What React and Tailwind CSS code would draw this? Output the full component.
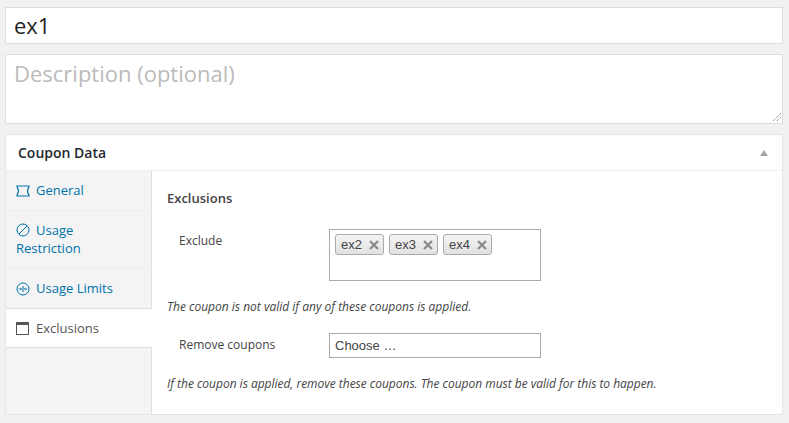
import React from 'react';

const TicketIcon = () => (
  <svg width="14" height="12" viewBox="0 0 14 12" fill="none" stroke="currentColor" strokeWidth="1.2" className="shrink-0">
    <path d="M1 1H13C13 3 11.500 4.200 11.500 6C11.500 7.800 13 9 13 11H1C1 9 2.500 7.800 2.500 6C2.500 4.200 1 3 1 1Z" />
  </svg>
);

const BanIcon = () => (
  <svg width="14" height="14" viewBox="0 0 14 14" fill="none" stroke="currentColor" strokeWidth="1" className="inline-block shrink-0">
    <circle cx="7" cy="7" r="6" />
    <path d="M3 11L11 3" />
  </svg>
);

const LimitsIcon = () => (
  <svg width="14" height="14" viewBox="0 0 14 14" fill="none" stroke="currentColor" strokeWidth="1" className="shrink-0">
    <circle cx="7" cy="7" r="6" />
    <path d="M7 4v6M3 7h2M9 7h2" />
    <path d="M4.500 5.800L5.700 7L4.500 8.200M9.500 5.800L8.300 7L9.500 8.200" strokeWidth="0.8" />
  </svg>
);

const WindowIcon = () => (
  <svg width="13" height="13" viewBox="0 0 13 13" className="shrink-0">
    <rect x="0.500" y="0.500" width="12" height="12" fill="none" stroke="#555" />
    <rect x="0" y="0" width="13" height="3" fill="#555" />
  </svg>
);

const Tag = ({ label }) => (
  <span className="flex items-center justify-between w-[49px] h-[21px] pl-[5px] pr-[4px] rounded-[3px] border border-[#aaa] bg-linear-to-b from-[#f4f4f4] to-[#e2e2e2] font-['Liberation_Sans',sans-serif] text-[13px] text-[#444]">
    {label}
    <svg width="10" height="10" viewBox="0 0 10 10" stroke="#888" strokeWidth="2.2">
      <path d="M1 1L9 9M9 1L1 9" />
    </svg>
  </span>
);

const App = () => {
  return (
    <div className="w-[789px] h-[423px] overflow-hidden bg-[#f1f1f1] pt-[7px] pl-[5px] pr-[6px] font-['Open_Sans',sans-serif] text-[#444]">
      <div className="h-[37px] flex items-center px-[8px] bg-white border border-[#ddd] text-[22px] text-[#222]">
        ex1
      </div>

      <div className="relative mt-[10px] h-[70px] px-[8px] pt-[2px] bg-white border border-[#ddd] text-[22px] text-[#bbb]">
        Description (optional)
        <svg width="10" height="10" viewBox="0 0 10 10" className="absolute right-[0px] bottom-[1px]" stroke="#666" strokeDasharray="1 1">
          <path d="M1 9L9 1M5 9L9 5" />
        </svg>
      </div>

      <div className="mt-[10px] h-[281px] flex flex-col bg-white border border-[#e5e5e5]">
        <div className="h-[36px] shrink-0 flex items-center justify-between pl-[12px] pr-[14px] border-b border-[#eee]">
          <span className="text-[14px] font-semibold text-[#23282d]">Coupon Data</span>
          <span className="mt-[1px] w-0 h-0 border-x-[4px] border-x-transparent border-b-[6px] border-b-[#a0a5aa]"></span>
        </div>

        <div className="flex flex-1 min-h-0">
          <div className="w-[146px] shrink-0 flex flex-col bg-[#f4f4f4] text-[13px] text-[#0073aa]">
            <div className="h-[40px] flex items-center gap-[6px] pl-[10px] border-b border-[#eee] border-r border-r-[#dfdfdf]">
              <TicketIcon />
              <span>General</span>
            </div>
            <div className="h-[58px] pl-[10px] pt-[10px] leading-[18px] border-b border-[#eee] border-r border-r-[#dfdfdf]">
              <div className="flex items-center gap-[6px]">
                <BanIcon />
                <span>Usage</span>
              </div>
              <div>Restriction</div>
            </div>
            <div className="h-[40px] flex items-center gap-[6px] pl-[10px] border-b border-[#dfdfdf] border-r border-r-[#dfdfdf]">
              <LimitsIcon />
              <span>Usage Limits</span>
            </div>
            <div className="h-[39px] flex items-center gap-[7px] pl-[10px] pt-[1px] bg-white text-[#555] border-b border-[#dfdfdf]">
              <WindowIcon />
              <span>Exclusions</span>
            </div>
            <div className="flex-1 border-r border-[#dfdfdf]"></div>
          </div>

          <div className="flex-1 pl-[15px] pt-[18px] text-[12px] text-[#444]">
            <div className="text-[13px] font-semibold leading-[18px]">Exclusions</div>

            <div className="flex mt-[22px]">
              <div className="w-[162px] pl-[12px] pt-[3px] leading-[18px]">Exclude</div>
              <div className="w-[212px] h-[52px] flex items-start gap-[5px] pt-[4px] pl-[5px] bg-white border border-[#aaa]">
                <Tag label="ex2" />
                <Tag label="ex3" />
                <Tag label="ex4" />
              </div>
            </div>
            <p className="mt-[17px] italic leading-[18px]">The coupon is not valid if any of these coupons is applied.</p>

            <div className="flex items-center mt-[17px]">
              <div className="w-[162px] pl-[12px] pb-[1px] leading-[18px]">Remove coupons</div>
              <div className="w-[212px] h-[25px] flex items-center pl-[5px] bg-white border border-[#aaa] font-['Liberation_Sans',sans-serif] text-[13px] text-[#444]">
                Choose …
              </div>
            </div>
            <p className="mt-[17px] italic leading-[18px] tracking-[-0.02px]">If the coupon is applied, remove these coupons. The coupon must be valid for this to happen.</p>
          </div>
        </div>
      </div>
    </div>
  );
};

export default App;
